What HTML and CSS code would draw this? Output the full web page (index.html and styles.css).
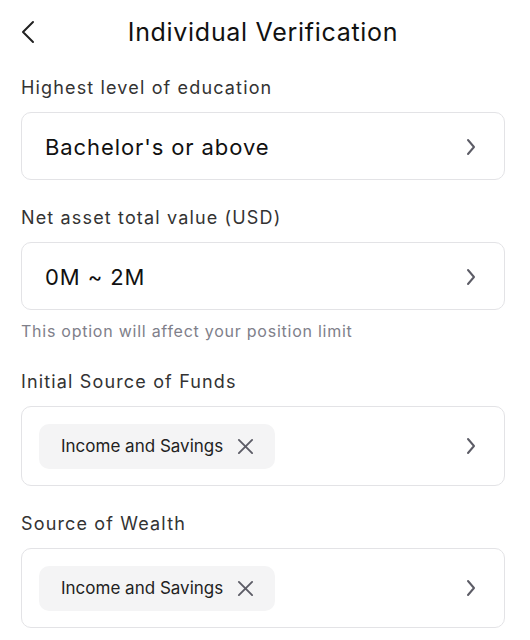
FILE: index.html
```html
<!DOCTYPE html>
<html lang="en">
<head>
<meta charset="utf-8">
<title>Individual Verification</title>
<link rel="stylesheet" href="styles.css">
</head>
<body>
<div class="page">
  <header class="header">
    <span class="back">
      <svg width="14" height="24" viewBox="0 0 14 24"><path d="M12 2 L2 12 L12 22" fill="none" stroke="#222" stroke-width="2" stroke-linecap="round" stroke-linejoin="round"/></svg>
    </span>
    <h1 class="title">Individual Verification</h1>
  </header>

  <section class="field">
    <div class="label">Highest level of education</div>
    <div class="box">
      <span class="value">Bachelor's or above</span>
      <svg class="chev" width="12" height="18" viewBox="0 0 12 18"><path d="M3 2 L9 9 L3 16" fill="none" stroke="#5c5c66" stroke-width="2" stroke-linecap="round" stroke-linejoin="round"/></svg>
    </div>
  </section>

  <section class="field">
    <div class="label">Net asset total value (USD)</div>
    <div class="box">
      <span class="value">0M ~ 2M</span>
      <svg class="chev" width="12" height="18" viewBox="0 0 12 18"><path d="M3 2 L9 9 L3 16" fill="none" stroke="#5c5c66" stroke-width="2" stroke-linecap="round" stroke-linejoin="round"/></svg>
    </div>
    <div class="hint">This option will affect your position limit</div>
  </section>

  <section class="field field-after-hint">
    <div class="label">Initial Source of Funds</div>
    <div class="box box-tall">
      <span class="chip">Income and Savings
        <svg class="chip-x" width="18" height="18" viewBox="0 0 18 18"><path d="M2 2 L16 16 M16 2 L2 16" fill="none" stroke="#5c5c66" stroke-width="2" stroke-linecap="round"/></svg>
      </span>
      <svg class="chev" width="12" height="18" viewBox="0 0 12 18"><path d="M3 2 L9 9 L3 16" fill="none" stroke="#5c5c66" stroke-width="2" stroke-linecap="round" stroke-linejoin="round"/></svg>
    </div>
  </section>

  <section class="field">
    <div class="label">Source of Wealth</div>
    <div class="box box-tall">
      <span class="chip">Income and Savings
        <svg class="chip-x" width="18" height="18" viewBox="0 0 18 18"><path d="M2 2 L16 16 M16 2 L2 16" fill="none" stroke="#5c5c66" stroke-width="2" stroke-linecap="round"/></svg>
      </span>
      <svg class="chev" width="12" height="18" viewBox="0 0 12 18"><path d="M3 2 L9 9 L3 16" fill="none" stroke="#5c5c66" stroke-width="2" stroke-linecap="round" stroke-linejoin="round"/></svg>
    </div>
  </section>
</div>
</body>
</html>
```

FILE: styles.css
```css
* { box-sizing: border-box; }
html, body { margin: 0; padding: 0; background: #fff; }
body {
  font-family: Inter, "Noto Sans", "Liberation Sans", sans-serif;
  color: #111;
}
.page {
  padding: 0 25px 0 21px;
}
.header {
  height: 64px;
  display: flex;
  align-items: center;
  position: relative;
  justify-content: center;
}
.back {
  position: absolute;
  left: 0;
  top: 20px;
  display: flex;
}
.title {
  margin: 0;
  font-size: 25px;
  font-weight: 400;
  letter-spacing: 0.7px;
  color: #111;
}
.field { margin-top: 12px; }
.field + .field { margin-top: 26px; }
.field-after-hint.field { margin-top: 28px; }
.label {
  font-size: 18px;
  line-height: 24px;
  letter-spacing: 1.15px;
  color: #333;
  margin-bottom: 12px;
}
.box {
  height: 68px;
  border: 1px solid #e3e3e6;
  border-radius: 10px;
  display: flex;
  align-items: center;
  justify-content: space-between;
  padding: 2px 27px 0 23px;
}
.box-tall {
  height: 80px;
  padding: 0 27px 0 17px;
}
.value {
  font-size: 22px;
  letter-spacing: 0.9px;
  color: #111;
}
.chev { display: block; }
.hint {
  margin-top: 10px;
  font-size: 16px;
  line-height: 22px;
  letter-spacing: 0.75px;
  color: #80808a;
}
.chip {
  height: 45px;
  display: flex;
  align-items: center;
  gap: 14px;
  background: #f4f4f5;
  border-radius: 10px;
  padding: 0 21px 0 22px;
  font-size: 17px;
  color: #222;
}
.chip-x { display: block; width: 17px; height: 17px; }
```
